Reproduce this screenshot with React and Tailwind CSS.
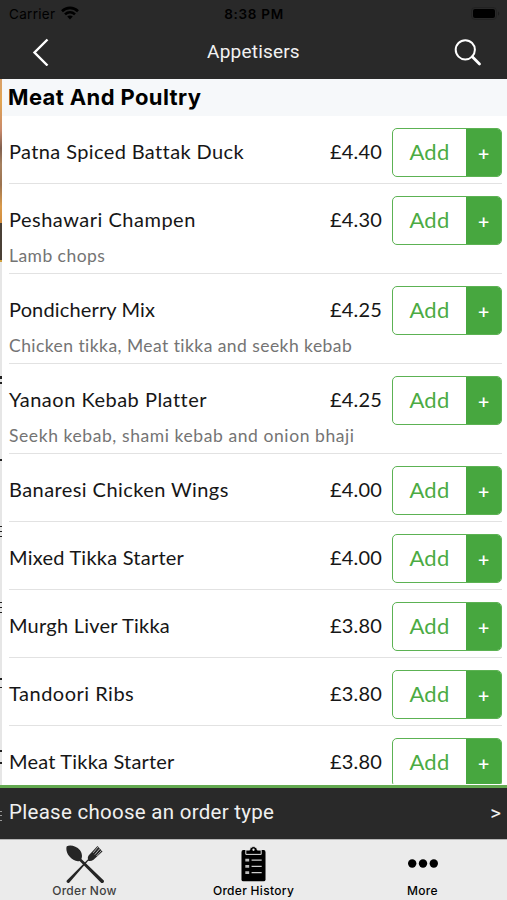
import React from 'react';
import { clsx } from 'clsx';

const ITEMS = [
  { name: 'Patna Spiced Battak Duck', price: '£4.40', tracking: 'tracking-[0.38px]' },
  {
    name: 'Peshawari Champen',
    price: '£4.30',
    note: 'Lamb chops',
    tracking: 'tracking-[0.5px]',
    noteTracking: 'tracking-[0.45px]',
  },
  {
    name: 'Pondicherry Mix',
    price: '£4.25',
    note: 'Chicken tikka, Meat tikka and seekh kebab',
    tracking: 'tracking-[0.15px]',
    noteTracking: 'tracking-[0.44px]',
  },
  {
    name: 'Yanaon Kebab Platter',
    price: '£4.25',
    note: 'Seekh kebab, shami kebab and onion bhaji',
    tracking: 'tracking-[0.5px]',
    noteTracking: 'tracking-[0.58px]',
  },
  { name: 'Banaresi Chicken Wings', price: '£4.00', tracking: 'tracking-[0.42px]' },
  { name: 'Mixed Tikka Starter', price: '£4.00', tracking: 'tracking-[0.23px]' },
  { name: 'Murgh Liver Tikka', price: '£3.80', tracking: 'tracking-[0.23px]' },
  { name: 'Tandoori Ribs', price: '£3.80', tracking: 'tracking-[0.5px]' },
  { name: 'Meat Tikka Starter', price: '£3.80', tracking: 'tracking-[0.2px]' },
];

function StatusBar() {
  return (
    <div className="grid h-7 grid-cols-3 items-center pl-[9px] pr-[7px] font-['Inter',sans-serif] text-[13.5px] text-black">
      <div className="flex items-center gap-[6px]">
        <span className="tracking-[0.3px]">Carrier</span>
        <svg className="-mt-[2px]" width="18" height="14" viewBox="0 0 18 14" fill="none" stroke="currentColor" strokeWidth="2.6">
          <path d="M1 5.2C5.6.7 12.4.7 17 5.2" />
          <path d="M4 8.4C6.9 5.7 11.1 5.7 14 8.4" />
          <path d="M9 13.5 6.2 10.6C7.8 9.2 10.2 9.2 11.8 10.6Z" fill="currentColor" stroke="none" />
        </svg>
      </div>
      <span className="-ml-px whitespace-nowrap text-center font-semibold tracking-[0.7px]">8:38 PM</span>
      <svg className="-mt-px justify-self-end" width="29" height="14" viewBox="0 0 29 14">
        <rect x="0.5" y="0.5" width="25" height="12" rx="3.5" fill="none" stroke="#222" />
        <rect x="2" y="2" width="22" height="9" rx="2" fill="#000" />
        <path d="M27 4.5c1.6.7 1.6 3.5 0 4.2Z" fill="#1c1c1c" />
      </svg>
    </div>
  );
}

function Header() {
  return (
    <header className="h-[79px] shrink-0 bg-[#292929]">
      <StatusBar />
      <div className="grid h-[49px] grid-cols-[60px_1fr_60px] items-center text-[#f2f2f2]">
        <svg className="-mt-[2px] ml-[32px]" width="18" height="28" viewBox="0 0 18 28" fill="none" stroke="#fff" strokeWidth="2.4">
          <path d="M15.5 1.5 2.5 14.5 15.5 27.5" />
        </svg>
        <h1 className="-mt-px text-center font-['Roboto',sans-serif] text-[19px] leading-6 tracking-[0.2px]">
          Appetisers
        </h1>
        <svg className="-mt-[2px] ml-[7px]" width="28" height="28" viewBox="0 0 28 28" fill="none" stroke="#fff">
          <circle cx="11.3" cy="11.8" r="9.6" strokeWidth="2" />
          <path d="M18.3 18.8 25.5 26" strokeWidth="2.8" strokeLinecap="round" />
        </svg>
      </div>
    </header>
  );
}

function AddButton() {
  return (
    <button className="flex h-[49px] w-[110px] shrink-0 overflow-hidden rounded-[5px] border-[1.5px] border-[#5cb253] bg-white">
      <span className="flex flex-1 items-center justify-center pb-[2px] text-[22px] tracking-[0.3px] text-[#4bab43]">
        Add
      </span>
      <span className="flex w-[35px] items-center justify-center bg-[#47a73f] pt-px font-['Inter',sans-serif] text-[20px] text-white">
        +
      </span>
    </button>
  );
}

function MenuItem({ name, price, note, tracking, noteTracking }) {
  return (
    <li className={clsx('shrink-0 border-b border-[#e2e2e2]', note ? 'h-[90px]' : 'h-[68px]')}>
      <div className="flex h-[61px] items-start pt-3">
        <span className={clsx('flex-1 whitespace-nowrap pt-[9px] text-[20px] leading-7 text-[#161616]', tracking)}>
          {name}
        </span>
        <span className="mr-[10px] pt-[9px] text-[20px] leading-7 tracking-[0.2px] text-[#161616]">{price}</span>
        <AddButton />
      </div>
      {note && (
        <p className={clsx('whitespace-nowrap text-[17.5px] leading-[22px] text-[#747474]', noteTracking)}>{note}</p>
      )}
    </li>
  );
}

// Edge of the previous screen, still visible on the left
function PreviousScreen() {
  return (
    <svg className="absolute left-0 top-[79px]" width="2" height="759" viewBox="0 79 2 759">
      <defs>
        <linearGradient id="photo" x1="0" y1="0" x2="0" y2="1">
          <stop offset="0" stopColor="#d9a06a" />
          <stop offset="0.12" stopColor="#e2a550" />
          <stop offset="0.28" stopColor="#c98a6b" />
          <stop offset="0.38" stopColor="#80604f" />
          <stop offset="0.47" stopColor="#a6815f" />
          <stop offset="0.58" stopColor="#9c7350" />
          <stop offset="0.7" stopColor="#d99a4b" />
          <stop offset="0.8" stopColor="#d28b3c" />
        </linearGradient>
      </defs>
      <rect y="79" width="2" height="706" fill="#e6e6e6" />
      <rect y="79" width="2" height="182" fill="url(#photo)" />
      <rect y="223" width="2" height="37" fill="#4a4036" />
      <rect y="260" width="2" height="2" fill="#d0a13e" />
      <path
        d="M0 376h2v3h-2zM0 382h2v2h-2zM0 459h2v2h-2zM0 526h2v1h-2zM0 531h2v1h-2zM0 536h2v1h-2zM0 602h2v1h-2zM0 607h2v1h-2zM0 612h2v1h-2zM0 678h2v2h-2zM0 687h2v1h-2zM0 750h2v2h-2zM0 762h2v2h-2z"
        fill="#222"
      />
      <path d="M0 811h2v1h-2zM0 815h2v1h-2zM0 820h2v1h-2z" fill="#999" />
    </svg>
  );
}

function CutleryIcon() {
  return (
    <svg width="38" height="38" viewBox="0 0 38 38" fill="#252525">
      <path d="M.8 1.2C4-.6 10.5.8 13.8 5c2.5 3.300 2.600 6.800 1.600 9L37.800 35.500c.8 1.700-.8 3.300-2.500 2.400L13.600 16C10.200 17 6.200 14.800 3.300 11.300.4 7.600-.2 3.500.8 1.200Z" />
      <path d="M23.5 9.5 31.5 1l5 5.500-9 8.200c-1.800 1.400-3.700 1.700-5.300 1.100L3.200 37.700c-1.700 1-3.300-.8-2.400-2.300L22 14.200c-.5-1.700.1-3.300 1.500-4.700Z" />
      <path d="M32.200 1.800 27.200 7.800M34 3.500 28.800 9.600M35.600 5.300 30.500 11" fill="none" stroke="#ebebeb" strokeWidth="0.7" />
    </svg>
  );
}

function ClipboardIcon() {
  return (
    <svg className="-ml-px" width="25" height="38" viewBox="0 0 26 38">
      <rect x="0.5" y="4.5" width="25" height="32.5" rx="2" fill="#000" />
      <path d="M5 9V4.500h4C9.500-.3 16.500-.3 17 4.500h4V9Z" fill="#000" stroke="#ebebeb" strokeWidth="1" />
      <circle cx="13" cy="4.200" r="1.200" fill="#ebebeb" />
      <path d="M4.500 13.500h4v3h-4zM4.500 20h4v3h-4zM4.500 26.500h4v3h-4z" fill="#bbb" />
      <path d="M11 15h10.500M11 21.500h10.500M11 28h10.500" stroke="#ccc" strokeWidth="1.200" />
    </svg>
  );
}

function MoreIcon() {
  return (
    <svg width="30" height="38" viewBox="0 0 30 38" fill="#000">
      <circle cx="4.2" cy="18.5" r="4.2" />
      <circle cx="15" cy="18.5" r="4.2" />
      <circle cx="25.8" cy="18.5" r="4.2" />
    </svg>
  );
}

const TABS = [
  { label: 'Order Now', Icon: CutleryIcon, color: 'text-[#3f3f3f]' },
  { label: 'Order History', Icon: ClipboardIcon, color: 'text-black' },
  { label: 'More', Icon: MoreIcon, color: 'text-black' },
];

export default function App() {
  return (
    <div className="relative flex h-[900px] w-[507px] flex-col overflow-hidden bg-white font-['Lato',sans-serif]">
      <Header />
      <main className="flex min-h-0 flex-1 flex-col overflow-hidden border-b border-white">
        <h2 className="h-[37px] shrink-0 bg-[#f6f8fa] pl-[8px] font-['Inter',sans-serif] text-[22px] font-bold leading-[36px] tracking-[0.38px] text-black">
          Meat And Poultry
        </h2>
        <ul className="flex flex-col pl-[9px] pr-[5px]">
          {ITEMS.map((item) => (
            <MenuItem key={item.name} {...item} />
          ))}
        </ul>
      </main>
      <button className="flex h-[54px] shrink-0 items-center justify-between border-t-[3px] border-[#63a950] bg-[#292929] pb-[2px] pl-[9px] pr-[6px] font-['Roboto',sans-serif] text-[20.5px] text-[#f0f0f0]">
        <span className="tracking-[0.28px]">Please choose an order type</span>
        <span className="pt-[2px]">&gt;</span>
      </button>
      <nav className="grid h-[61px] shrink-0 grid-cols-3 border-t border-[#b5b5b5] bg-[#ebebeb]">
        {TABS.map(({ label, Icon, color }) => (
          <a key={label} className="flex flex-col items-center pt-[5px]">
            <Icon />
            <span className={clsx("font-['Inter',sans-serif] text-[12px] font-medium leading-[15px] tracking-[0.3px]", color)}>
              {label}
            </span>
          </a>
        ))}
      </nav>
      <PreviousScreen />
    </div>
  );
}
